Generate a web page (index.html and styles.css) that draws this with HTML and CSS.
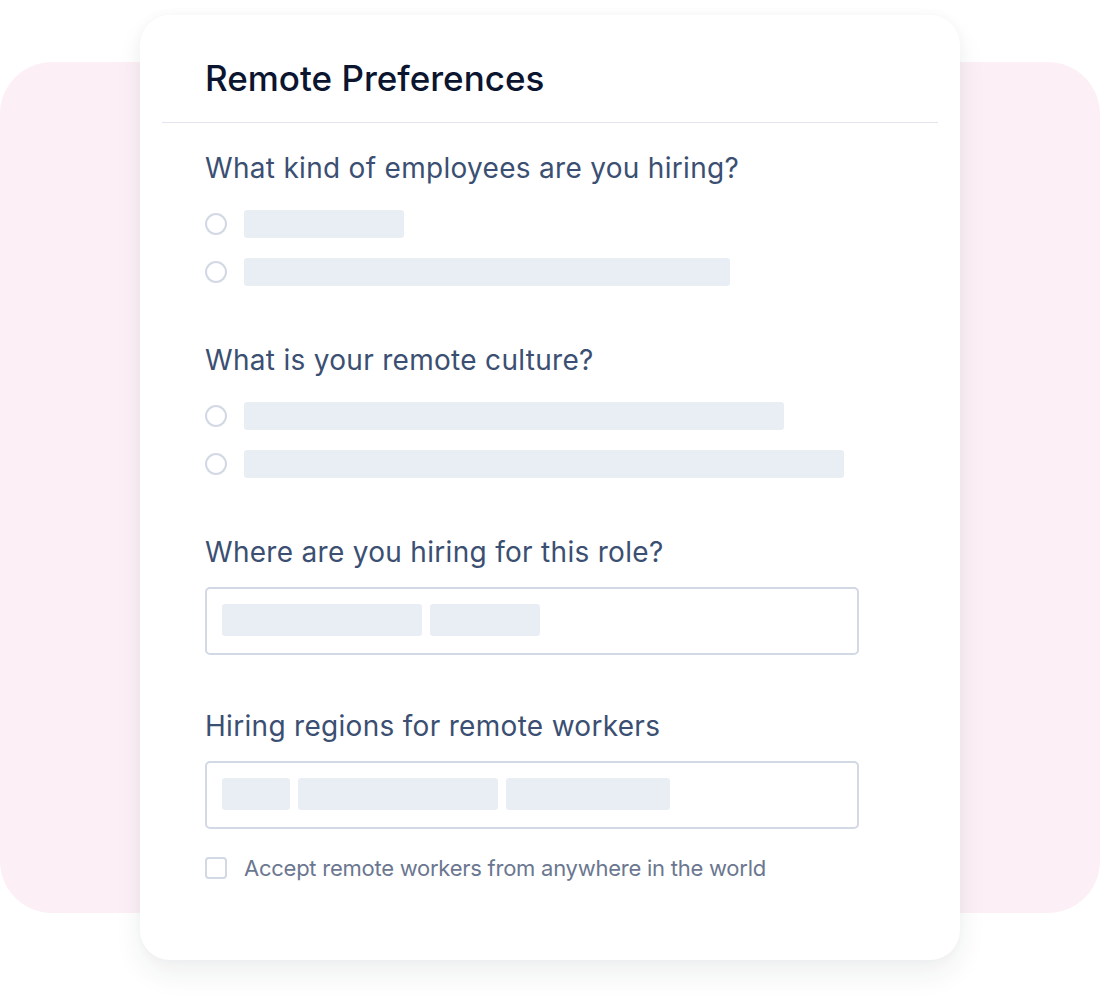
FILE: index.html
```html
<!DOCTYPE html>
<html>
<head>
<meta charset="utf-8">
<link rel="stylesheet" href="styles.css">
</head>
<body>
<div class="stage">
  <div class="backdrop"></div>
  <div class="card">
    <div class="card-header">
      <h1 class="title">Remote Preferences</h1>
    </div>
    <div class="divider"></div>
    <div class="card-body">
      <section class="group">
        <h2 class="question">What kind of employees are you hiring?</h2>
        <div class="options">
          <div class="option"><span class="radio"></span><span class="bar" style="width:160px"></span></div>
          <div class="option"><span class="radio"></span><span class="bar" style="width:486px"></span></div>
        </div>
      </section>
      <section class="group">
        <h2 class="question">What is your remote culture?</h2>
        <div class="options">
          <div class="option"><span class="radio"></span><span class="bar" style="width:540px"></span></div>
          <div class="option"><span class="radio"></span><span class="bar" style="width:600px"></span></div>
        </div>
      </section>
      <section class="group group-field">
        <h2 class="question">Where are you hiring for this role?</h2>
        <div class="field">
          <span class="chip" style="width:200px"></span>
          <span class="chip" style="width:110px"></span>
        </div>
      </section>
      <section class="group group-tight">
        <h2 class="question">Hiring regions for remote workers</h2>
        <div class="field">
          <span class="chip" style="width:68px"></span>
          <span class="chip" style="width:200px"></span>
          <span class="chip" style="width:164px"></span>
        </div>
      </section>
      <label class="check">
        <span class="checkbox"></span>
        <span class="check-label">Accept remote workers from anywhere in the world</span>
      </label>
    </div>
  </div>
</div>
</body>
</html>
```
FILE: styles.css
```css
* { box-sizing: border-box; }
html, body {
  margin: 0;
  padding: 0;
  background: #ffffff;
  font-family: Inter, "Noto Sans", sans-serif;
}
.stage {
  position: relative;
  width: 1100px;
  height: 1008px;
  padding-top: 15px;
  overflow: hidden;
}
.backdrop {
  position: absolute;
  left: 0;
  top: 62px;
  width: 1100px;
  height: 851px;
  background: #fcf0f6;
  border-radius: 52px;
}
.card {
  position: relative;
  margin-left: 140px;
  width: 820px;
  height: 945px;
  background: #ffffff;
  border-radius: 30px;
  box-shadow: 0 14px 28px rgba(30, 41, 59, 0.07), 0 0 12px rgba(30, 41, 59, 0.03);
}
.card-header {
  padding: 43px 65px 24px;
}
.title {
  margin: 0;
  font-size: 35px;
  line-height: 40px;
  font-weight: 500;
  color: #0b1530;
  letter-spacing: 0;
}
.divider {
  margin: 0 22px;
  height: 1px;
  background: #e2e5ee;
}
.card-body {
  padding: 28px 65px 0;
  display: flex;
  flex-direction: column;
}
.group {
  display: flex;
  flex-direction: column;
  margin-bottom: 57px;
}
.group-field { margin-bottom: 54px; }
.group-tight { margin-bottom: 28px; }
.question {
  margin: 0;
  font-size: 28px;
  line-height: 34px;
  font-weight: 400;
  color: #3b4f72;
  letter-spacing: 0.3px;
}
.options {
  display: flex;
  flex-direction: column;
  gap: 20px;
  margin-top: 25px;
}
.option {
  display: flex;
  align-items: center;
  gap: 17px;
  height: 28px;
}
.radio {
  width: 22px;
  height: 22px;
  border: 2px solid #d3d8e5;
  border-radius: 50%;
  flex: none;
}
.bar {
  height: 28px;
  background: #e9eef5;
  border-radius: 3px;
}
.field {
  margin-top: 18px;
  width: 654px;
  height: 68px;
  border: 2px solid #d3d8e5;
  border-radius: 5px;
  padding: 15px;
  display: flex;
  gap: 8px;
}
.chip {
  height: 32px;
  background: #e9eef5;
  border-radius: 3px;
}
.check {
  display: flex;
  align-items: center;
  gap: 17px;
  height: 22px;
}
.checkbox {
  width: 22px;
  height: 22px;
  border: 2px solid #d3d8e5;
  border-radius: 4px;
  flex: none;
}
.check-label {
  font-size: 22px;
  line-height: 22px;
  color: #6b7790;
  letter-spacing: -0.25px;
}
```
